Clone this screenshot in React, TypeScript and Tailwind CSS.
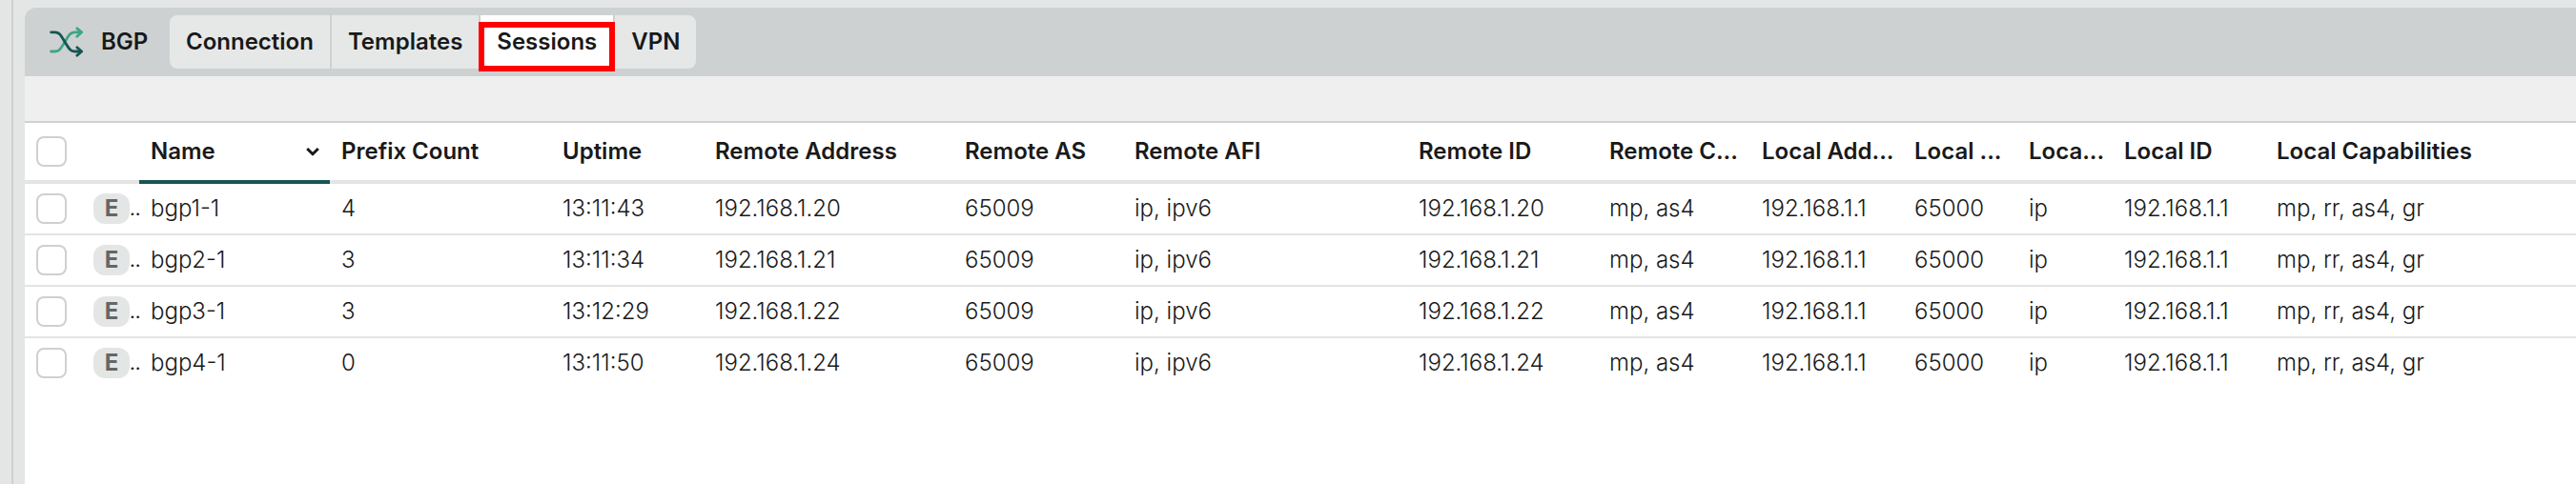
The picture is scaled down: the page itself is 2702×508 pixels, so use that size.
import React, { useState } from "react";
import clsx from "clsx";

interface ISession {
  name: string;
  prefixCount: number;
  uptime: string;
  remoteAddress: string;
  remoteAs: string;
  remoteAfi: string;
  remoteId: string;
  remoteCapabilities: string;
  localAddress: string;
  localAs: string;
  localAfi: string;
  localId: string;
  localCapabilities: string;
}

interface IColumn {
  key: keyof ISession;
  label: string;
  width: string;
}

const TABS = ["Connection", "Templates", "Sessions", "VPN"];

const COLUMNS: IColumn[] = [
  { key: "name", label: "Name", width: "w-[200px]" },
  { key: "prefixCount", label: "Prefix Count", width: "w-[232px]" },
  { key: "uptime", label: "Uptime", width: "w-[160px]" },
  { key: "remoteAddress", label: "Remote Address", width: "w-[262px]" },
  { key: "remoteAs", label: "Remote AS", width: "w-[178px]" },
  { key: "remoteAfi", label: "Remote AFI", width: "w-[298px]" },
  { key: "remoteId", label: "Remote ID", width: "w-[200px]" },
  { key: "remoteCapabilities", label: "Remote C...", width: "w-[160px]" },
  { key: "localAddress", label: "Local Add...", width: "w-[160px]" },
  { key: "localAs", label: "Local ...", width: "w-[120px]" },
  { key: "localAfi", label: "Loca...", width: "w-[100px]" },
  { key: "localId", label: "Local ID", width: "w-[160px]" },
  { key: "localCapabilities", label: "Local Capabilities", width: "w-auto" },
];

const common = {
  remoteAs: "65009",
  remoteAfi: "ip, ipv6",
  remoteCapabilities: "mp, as4",
  localAddress: "192.168.1.1",
  localAs: "65000",
  localAfi: "ip",
  localId: "192.168.1.1",
  localCapabilities: "mp, rr, as4, gr",
};

const SESSIONS: ISession[] = [
  {
    ...common,
    name: "bgp1-1",
    prefixCount: 4,
    uptime: "13:11:43",
    remoteAddress: "192.168.1.20",
    remoteId: "192.168.1.20",
  },
  {
    ...common,
    name: "bgp2-1",
    prefixCount: 3,
    uptime: "13:11:34",
    remoteAddress: "192.168.1.21",
    remoteId: "192.168.1.21",
  },
  {
    ...common,
    name: "bgp3-1",
    prefixCount: 3,
    uptime: "13:12:29",
    remoteAddress: "192.168.1.22",
    remoteId: "192.168.1.22",
  },
  {
    ...common,
    name: "bgp4-1",
    prefixCount: 0,
    uptime: "13:11:50",
    remoteAddress: "192.168.1.24",
    remoteId: "192.168.1.24",
  },
];

const BgpIcon = () => (
  <svg
    viewBox="0 0 36 32"
    className="h-8 w-9"
    fill="none"
    strokeWidth="2.8"
    strokeLinecap="round"
    strokeLinejoin="round"
    aria-hidden="true"
  >
    <g stroke="#3fa585">
      <path d="M1.6 26h4.2c4.6 0 6.2-3.6 10.2-10s5.6-10.2 10.4-10.2H33" />
      <path d="M28.8 1.8l4.8 4-4.8 4.4" />
    </g>
    <g stroke="#165553">
      <path d="M1.6 5.8h4.2c4.6 0 6.2 3.8 10.2 10.2S21.6 26 26.4 26H33" />
      <path d="M28.8 21.8l4.8 4.2-4.8 4.2" />
    </g>
  </svg>
);

const Checkbox = ({ label }: { label: string }) => (
  <input
    type="checkbox"
    aria-label={label}
    className="block size-8 appearance-none rounded-lg border-2 border-[#cdd1d0] bg-white checked:bg-[#165553]"
  />
);

const App = () => {
  const [activeTab, setActiveTab] = useState("Sessions");

  return (
    <div className="flex min-h-screen bg-[#e4e6e5] font-['Inter','Liberation_Sans',sans-serif] text-2xl text-[#191919]">
      <div className="w-3.5 shrink-0 border-r-2 border-[#cdd1d0]" />

      <main className="flex min-w-0 flex-1 flex-col pt-2 pl-3">
        {/* Title bar */}
        <header className="flex items-center rounded-tl-xl bg-[#cdd1d2] py-2 pl-[26px] font-semibold">
          <BgpIcon />
          <h1 className="ml-[18px] w-[72px]">BGP</h1>
          <nav className="flex h-14 gap-0.5">
            {TABS.map((tab) => (
              <button
                key={tab}
                type="button"
                onClick={() => setActiveTab(tab)}
                className={clsx(
                  "relative px-[17px] first:rounded-l-lg last:rounded-r-lg",
                  tab === activeTab ? "bg-white" : "bg-[#e6e8e7]"
                )}
              >
                {tab}
                {tab === "Sessions" && (
                  <span className="absolute -inset-x-0.5 top-[7px] -bottom-[3px] z-10 border-6 border-[#ff0000]" />
                )}
              </button>
            ))}
          </nav>
        </header>

        {/* Toolbar */}
        <div className="h-[49px] border-b-2 border-[#cdd1d0] bg-[#efefef]" />

        {/* Sessions table */}
        <div className="flex-1 bg-white">
          <table className="w-full table-fixed border-separate border-spacing-0 text-left">
            <thead>
              <tr className="h-16">
                <th className="w-[60px] border-b-4 border-[#e4e4e4] pl-3">
                  <Checkbox label="Select all sessions" />
                </th>
                <th className="w-[60px] border-b-4 border-[#e4e4e4]" />
                {COLUMNS.map((column) => (
                  <th
                    key={column.key}
                    className={clsx(
                      "border-b-4 pl-3 font-semibold whitespace-nowrap",
                      column.width,
                      column.key === "name"
                        ? "border-[#165553]"
                        : "border-[#e4e4e4]"
                    )}
                  >
                    {column.key === "name" ? (
                      <div className="flex items-center justify-between pr-[11px]">
                        {column.label}
                        <svg
                          viewBox="0 0 14 10"
                          className="h-2.5 w-3.5"
                          fill="none"
                          stroke="currentColor"
                          strokeWidth="3"
                          strokeLinejoin="round"
                          aria-hidden="true"
                        >
                          <path d="M1.2 2l5.8 5.8L12.8 2" />
                        </svg>
                      </div>
                    ) : (
                      column.label
                    )}
                  </th>
                ))}
              </tr>
            </thead>
            <tbody>
              {SESSIONS.map((session) => (
                <tr
                  key={session.name}
                  className="group h-[54px] font-light whitespace-nowrap"
                >
                  <td className="border-b-2 border-[#e4e4e4] pl-3 group-last:border-transparent">
                    <Checkbox label={`Select ${session.name}`} />
                  </td>
                  <td className="border-b-2 border-[#e4e4e4] pl-3 group-last:border-transparent">
                    <div className="flex h-8 items-center">
                      <span className="flex h-8 w-[38px] shrink-0 items-center justify-center rounded-xl bg-[#e4e6e5] font-bold text-[#666666]">
                        E
                      </span>
                      <span className="text-xl font-normal">..</span>
                    </div>
                  </td>
                  {COLUMNS.map((column) => (
                    <td
                      key={column.key}
                      className="border-b-2 border-[#e4e4e4] pl-3 group-last:border-transparent"
                    >
                      {session[column.key]}
                    </td>
                  ))}
                </tr>
              ))}
            </tbody>
          </table>
        </div>
      </main>
    </div>
  );
};

export default App;
